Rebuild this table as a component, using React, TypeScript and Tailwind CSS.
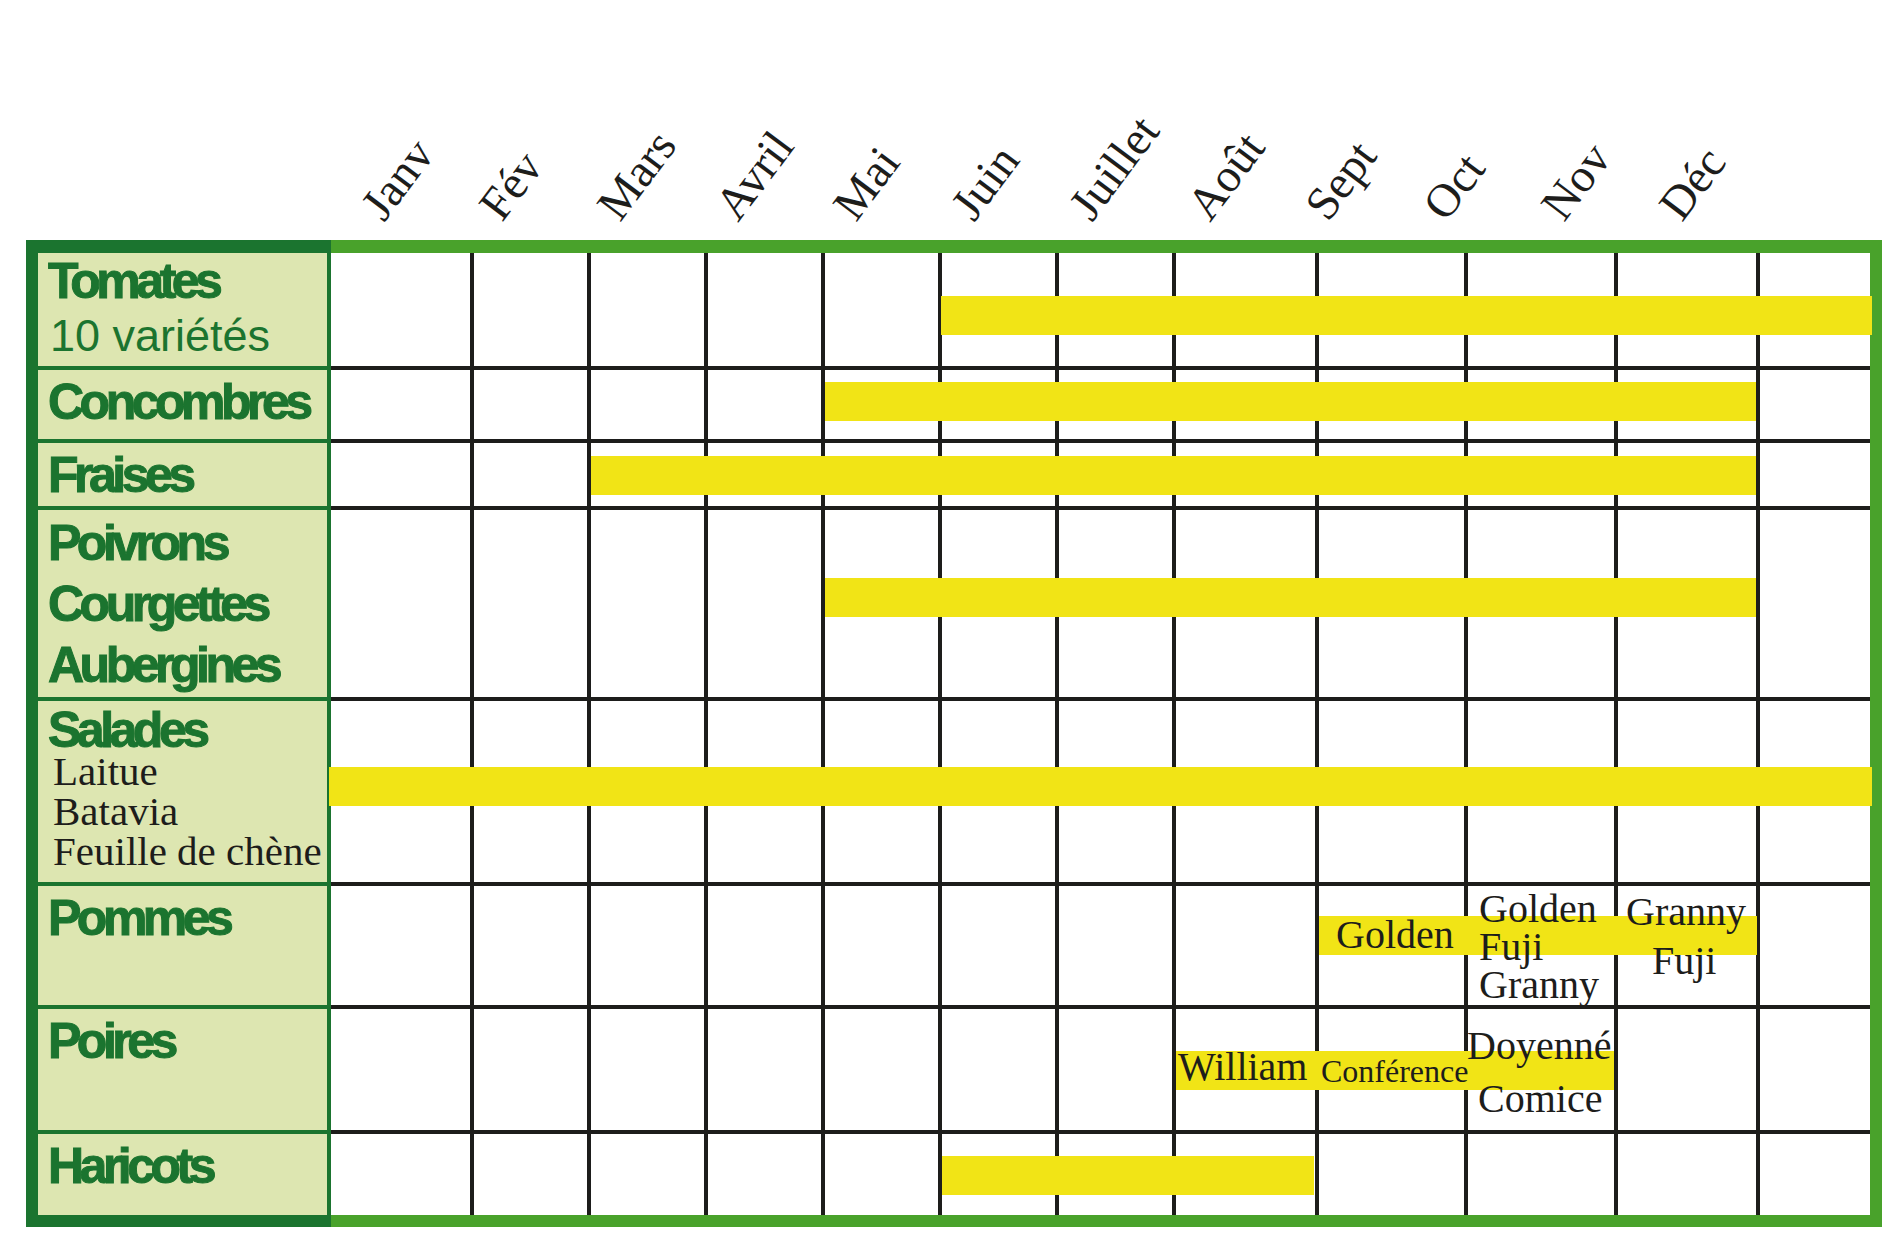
import React from "react";

const SANS = "font-['Liberation_Sans',Arial,sans-serif]";
const SERIF = "font-['Liberation_Serif','Times_New_Roman',serif]";
const HEAD = `${SANS} font-bold text-[50px] tracking-[-4.5px] text-[#1b742f] [-webkit-text-stroke:1px_#1b742f]`;

const MONTHS = ["Janv", "Fév", "Mars", "Avril", "Mai", "Juin", "Juillet", "Août", "Sept", "Oct", "Nov", "Déc"];

// column widths include the 4px right rule (last one has none)
const COLS = [
  "w-[143px]",
  "w-[117px]",
  "w-[117px]",
  "w-[117px]",
  "w-[117px]",
  "w-[117px]",
  "w-[117px]",
  "w-[143px]",
  "w-[149px]",
  "w-[150px]",
  "w-[142px]",
  "w-[110px]",
];

type Row = {
  h: string;
  bar: string;
  label: React.ReactNode;
  extra?: React.ReactNode;
};

const ROWS: Row[] = [
  {
    h: "h-[117px]",
    bar: "left-[610px] top-[43px] w-[931px]",
    label: (
      <div className="pl-[10px]">
        <div className={`${HEAD} leading-[57px]`}>Tomates</div>
        <div className={`${SANS} pl-[2px] text-[45px] leading-[52px] text-[#1b742f]`}>10 variétés</div>
      </div>
    ),
  },
  {
    h: "h-[73px]",
    bar: "left-[494px] top-[12px] w-[931px]",
    label: <div className={`${HEAD} pl-[10px] pt-[2px] leading-[61px]`}>Concombres</div>,
  },
  {
    h: "h-[67px]",
    bar: "left-[260px] top-[13px] w-[1165px]",
    label: <div className={`${HEAD} pl-[10px] pt-[2px] leading-[61px]`}>Fraises</div>,
  },
  {
    h: "h-[191px]",
    bar: "left-[494px] top-[68px] w-[931px]",
    label: (
      <div className={`${HEAD} pl-[10px] pt-[3px] leading-[61px]`}>
        <div>Poivrons</div>
        <div>Courgettes</div>
        <div>Aubergines</div>
      </div>
    ),
  },
  {
    h: "h-[185px]",
    bar: "left-[-2px] top-[66px] w-[1543px]",
    label: (
      <div className="pl-[10px] pt-[1px]">
        <div className={`${HEAD} leading-[57px]`}>Salades</div>
        <div className={`${SERIF} -mt-[8px] pl-[5px] text-[41px] leading-[40px] text-[#1d1d1b]`}>
          <div>Laitue</div>
          <div>Batavia</div>
          <div className="whitespace-nowrap">Feuille de chène</div>
        </div>
      </div>
    ),
  },
  {
    h: "h-[123px]",
    bar: "left-[988px] top-[30px] w-[438px]",
    label: <div className={`${HEAD} pl-[10px] pt-[2px] leading-[61px]`}>Pommes</div>,
    extra: (
      <>
        <span className="absolute left-[1005px] top-[29px] leading-none">Golden</span>
        <div className="absolute left-[1148px] top-[4px] leading-[38px]">
          <div>Golden</div>
          <div>Fuji</div>
          <div>Granny</div>
        </div>
        <span className="absolute left-[1295px] top-[6px] leading-none">Granny</span>
        <span className="absolute left-[1321px] top-[55px] leading-none">Fuji</span>
      </>
    ),
  },
  {
    h: "h-[125px]",
    bar: "left-[845px] top-[42px] w-[438px]",
    label: <div className={`${HEAD} pl-[10px] pt-[2px] leading-[61px]`}>Poires</div>,
    extra: (
      <>
        <span className="absolute left-[847px] top-[38px] leading-none">William</span>
        <span className="absolute left-[990px] top-[46px] text-[32px] leading-none">Conférence</span>
        <span className="absolute left-[1136px] top-[17px] leading-none">Doyenné</span>
        <span className="absolute left-[1147px] top-[70px] leading-none">Comice</span>
      </>
    ),
  },
  {
    h: "h-[81px]",
    bar: "left-[611px] top-[22px] w-[372px]",
    label: <div className={`${HEAD} pl-[10px] pt-[2px] leading-[61px]`}>Haricots</div>,
  },
];

export default function App() {
  return (
    <div className="w-[1896px] h-[1240px] overflow-hidden bg-white">
      {/* month labels */}
      <div className={`${SERIF} flex h-[240px] pl-[384px] pt-[184px] text-[47px] text-[#1d1d1b]`}>
        {MONTHS.map((m) => (
          <div key={m} className="w-[118px] shrink-0">
            <span className="block w-max origin-[0_39px] -rotate-[53deg] leading-none">{m}</span>
          </div>
        ))}
      </div>

      <div className="ml-[26px] flex w-[1856px]">
        {/* product column */}
        <div className="w-[305px] shrink-0 border-l-[12px] border-t-[13px] border-b-[12px] border-r-4 border-[#1b742f] bg-[#dde6b1]">
          {ROWS.map((r, i) => (
            <div
              key={i}
              className={`${r.h} ${i < ROWS.length - 1 ? "border-b-4 border-[#1b742f]" : ""}`}
            >
              {r.label}
            </div>
          ))}
        </div>

        {/* calendar grid */}
        <div className="w-[1551px] shrink-0 border-t-[13px] border-b-[12px] border-r-[12px] border-[#49a22b]">
          {ROWS.map((r, i) => (
            <div
              key={i}
              className={`relative flex ${r.h} ${i < ROWS.length - 1 ? "border-b-4 border-[#1d1d1b]" : ""}`}
            >
              {COLS.map((w, j) => (
                <div
                  key={j}
                  className={`${w} h-full shrink-0 ${j < COLS.length - 1 ? "border-r-4 border-[#1d1d1b]" : ""}`}
                />
              ))}
              <div className={`absolute h-[39px] bg-[#f1e416] ${r.bar}`} />
              {r.extra && (
                <div className={`${SERIF} text-[40px] text-[#1d1d1b]`}>{r.extra}</div>
              )}
            </div>
          ))}
        </div>
      </div>
    </div>
  );
}
